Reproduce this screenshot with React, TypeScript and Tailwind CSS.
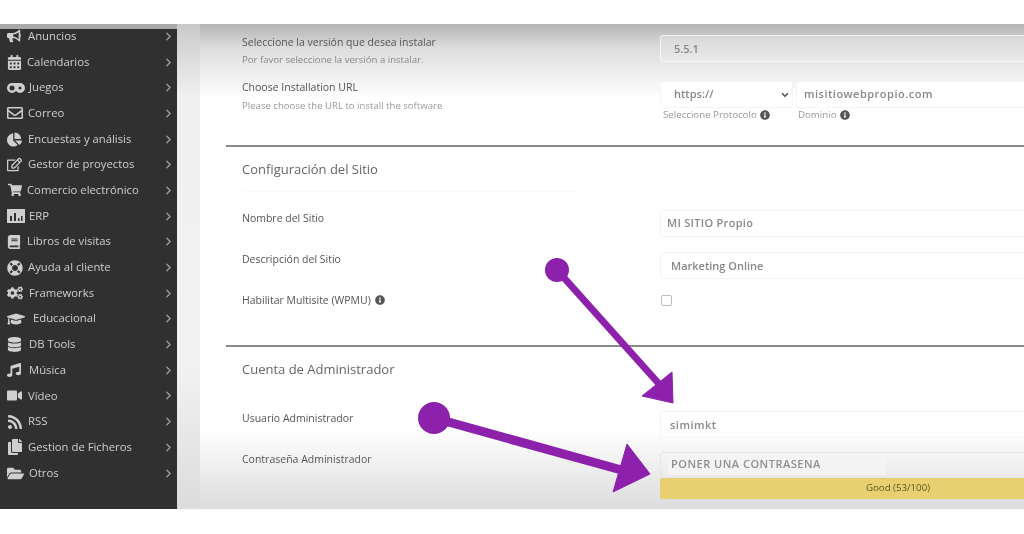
import React from "react";
import {
  FaBullhorn, FaCalendarAlt, FaRegEnvelope, FaChartPie, FaRegEdit, FaShoppingCart,
  FaBook, FaLifeRing, FaCogs, FaGraduationCap, FaDatabase, FaMusic, FaVideo, FaRss, FaCopy, FaFolderOpen, FaInfoCircle,
} from "react-icons/fa";
import { ChevronRight, ChevronDown } from "lucide-react";

function PillIcon() {
  return (
    <svg viewBox="0 0 18 10" className="h-[10px] w-[18px]" fill="currentColor">
      <path fillRule="evenodd" d="M5 0h8a5 5 0 0 1 0 10c-1.6 0-2.6-.8-4-2-1.4 1.2-2.4 2-4 2A5 5 0 0 1 5 0Zm0 2.5a2.5 2.5 0 1 0 0 5 2.5 2.5 0 0 0 0-5Zm8 1a1.5 1.5 0 1 0 0 3 1.5 1.5 0 0 0 0-3Z" />
    </svg>
  );
}

function ErpIcon() {
  return (
    <svg viewBox="0 0 18 14" className="h-[14px] w-[18px]" fill="currentColor">
      <path fillRule="evenodd" d="M0 0h18v14H0Zm3 7v5h2V7Zm4-3v8h2V4Zm4 5v3h1.500V9Zm3-2v5h1.500V7Z" />
    </svg>
  );
}

const items: { label: string; icon: React.ReactNode; cls: string; size: string }[] = [
  { label: "Anuncios", icon: <FaBullhorn />, cls: "ml-[7px] w-[21px]", size: "text-[14px]" },
  { label: "Calendarios", icon: <FaCalendarAlt />, cls: "ml-[7px] w-[20px]", size: "text-[15px]" },
  { label: "Juegos", icon: <PillIcon />, cls: "ml-[7px] w-[22px]", size: "text-[18px]" },
  { label: "Correo", icon: <FaRegEnvelope />, cls: "ml-[7px] w-[21px]", size: "text-[16px]" },
  { label: "Encuestas y análisis", icon: <FaChartPie />, cls: "ml-[7px] w-[21px]", size: "text-[15px]" },
  { label: "Gestor de proyectos", icon: <FaRegEdit />, cls: "ml-[7px] w-[21px]", size: "text-[15px]" },
  { label: "Comercio electrónico", icon: <FaShoppingCart />, cls: "ml-[8px] w-[19px]", size: "text-[14px]" },
  { label: "ERP", icon: <ErpIcon />, cls: "ml-[7px] w-[22px]", size: "text-[17px]" },
  { label: "Libros de visitas", icon: <FaBook />, cls: "ml-[7px] w-[20px]", size: "text-[14px]" },
  { label: "Ayuda al cliente", icon: <FaLifeRing />, cls: "ml-[7px] w-[21px]", size: "text-[16px]" },
  { label: "Frameworks", icon: <FaCogs />, cls: "ml-[7px] w-[22px]", size: "text-[16px]" },
  { label: "Educacional", icon: <FaGraduationCap />, cls: "ml-[7px] w-[26px]", size: "text-[18px]" },
  { label: "DB Tools", icon: <FaDatabase />, cls: "ml-[7px] w-[22px]", size: "text-[15px]" },
  { label: "Música", icon: <FaMusic />, cls: "ml-[7px] w-[22px]", size: "text-[14px]" },
  { label: "Vídeo", icon: <FaVideo />, cls: "ml-[7px] w-[21px]", size: "text-[15px]" },
  { label: "RSS", icon: <FaRss />, cls: "ml-[7px] w-[21px]", size: "text-[16px]" },
  { label: "Gestion de Ficheros", icon: <FaCopy />, cls: "ml-[7px] w-[21px]", size: "text-[16px]" },
  { label: "Otros", icon: <FaFolderOpen />, cls: "ml-[7px] w-[22px]", size: "text-[17px]" },
];

function Label({ children, className = "" }: { children: React.ReactNode; className?: string }) {
  return <div className={"w-[434px] shrink-0 pl-4 text-[10.5px] leading-[14px] text-[#555] " + className}>{children}</div>;
}

function Field({ children, className = "" }: { children?: React.ReactNode; className?: string }) {
  return (
    <div className={"flex h-[27px] w-[476px] shrink-0 items-center rounded-[3px] border border-[#f5f5f5] font-semibold text-[#888] " + className}>
      {children}
    </div>
  );
}

export default function App() {
  return (
    <div className="h-[534px] w-[1024px] overflow-hidden bg-white pt-6 font-['Open_Sans',sans-serif]">
      <div className="relative flex h-[485px] overflow-hidden blur-[0.6px]">
        <aside className="flex w-[177px] shrink-0 flex-col bg-[#303030]">
          <div className="h-[5px] shrink-0 bg-[#a9a9a9]" />
          <div className="-mt-[5.5px] overflow-hidden">
            {items.map(({ label, icon, cls, size }) => (
              <div key={label} className="flex h-[25.7px] items-center text-[11.3px] text-[#cfcfcf]">
                <span className={"flex shrink-0 items-center " + cls + " " + size}>{icon}</span>
                <span className="flex-1 whitespace-nowrap">{label}</span>
                <ChevronRight className="mr-[2px] h-[13px] w-[13px] text-[#9a9a9a]" strokeWidth={2.5} />
              </div>
            ))}
          </div>
        </aside>
        <div className="w-[23px] shrink-0 bg-[linear-gradient(#c9c9c9,#f0f0f0_15%,#f2f2f2_70%,#dcdcdc)]" />
        <main className="min-w-0 flex-1 bg-[linear-gradient(#b4b4b4_0px,#dedede_25px,#ffffff_75px,#ffffff_405px,#dcdcdc_485px)] pl-[26px]">
          <section className="h-[123px] border-b-2 border-[#8a8a8a] pt-[11px]">
            <div className="flex h-[27px]">
              <Label>
                <div>Seleccione la versión que desea instalar</div>
                <div className="mt-[4px] text-[9.6px] text-[#888]">Por favor seleccione la versión a instalar.</div>
              </Label>
              <Field className="bg-[linear-gradient(#d8d8d8,#eaeaea)] pl-[13px] pt-[1px] text-[11px]">5.5.1</Field>
            </div>
            <div className="mt-[18px] flex">
              <Label>
                <div>Choose Installation URL</div>
                <div className="mt-[5px] text-[9.6px] text-[#999]">Please choose the URL to install the software</div>
              </Label>
              <div className="w-[476px] shrink-0">
                <div className="flex gap-[3px] pt-[1px]">
                  <div className="flex h-[27px] w-[133px] shrink-0 items-center justify-between rounded-[3px] border border-[#f5f5f5] bg-white pl-[13px] pr-[2px] text-[11px] font-semibold text-[#888]">
                    https://
                    <ChevronDown className="h-[10px] w-[10px] text-[#555]" strokeWidth={4} />
                  </div>
                  <Field className="w-[340px] bg-white pl-[7px] text-[11px] tracking-[0.5px]">misitiowebpropio.com</Field>
                </div>
                <div className="flex text-[9.7px] leading-[14px] text-[#999]">
                  <span className="flex w-[135px] items-center gap-[3px] pl-[3px]">
                    Seleccione Protocolo <FaInfoCircle className="text-[10px] text-[#555]" />
                  </span>
                  <span className="flex items-center gap-[3px] pl-[3px]">
                    Dominio <FaInfoCircle className="text-[10px] text-[#555]" />
                  </span>
                </div>
              </div>
            </div>
          </section>

          <section className="h-[200px] border-b-2 border-[#8a8a8a]">
            <div className="ml-4 h-[45px] w-[336px] border-b border-[#f9f9f9] pt-[12px] text-[13px] leading-[20px] text-[#666]">
              Configuración del Sitio
            </div>
            <div className="mt-[18px] flex h-[27px]">
              <Label className="pt-[1px]">Nombre del Sitio</Label>
              <Field className="pl-[6px] text-[11px] tracking-[0.3px]">MI SITIO Propio</Field>
            </div>
            <div className="mt-[15px] flex h-[27px]">
              <Label>Descripción del Sitio</Label>
              <Field className="pl-[10px] pt-[1px] text-[11px] font-medium text-[#666]">Marketing Online</Field>
            </div>
            <div className="mt-[14px] flex h-[14px] items-center">
              <Label>
                <span className="flex items-center gap-[4px]">
                  Habilitar Multisite (WPMU) <FaInfoCircle className="text-[10px] text-[#555]" />
                </span>
              </Label>
              <div className="ml-[1px] h-[11px] w-[11px] rounded-[2px] border border-[#bbbbbb] bg-white" />
            </div>
          </section>

          <section>
            <div className="ml-4 h-[43px] pt-[12px] text-[13px] leading-[20px] text-[#666]">Cuenta de Administrador</div>
            <div className="mt-[21px] flex h-[27px]">
              <Label>Usuario Administrador</Label>
              <Field className="pl-[9px] pt-[1px] text-[11px] tracking-[0.5px] text-[#8f8f8f]">simimkt</Field>
            </div>
            <div className="mt-[14px] flex">
              <Label>Contraseña Administrador</Label>
              <div className="w-[476px] shrink-0">
                <div className="flex h-[26px] items-center rounded-[3px] border border-[#dfe8ee] pb-[1px] pl-[7px]">
                  <div className="flex h-[20px] w-[218px] items-center bg-[#f4f4f4] pl-[3px] text-[11px] font-semibold tracking-[0.5px] text-[#8f8f8f]">
                    PONER UNA CONTRASENA
                  </div>
                </div>
                <div className="flex h-[21px] items-center justify-center rounded-[2px] bg-[#e8d070] text-[9.7px] font-medium text-[#5f5428]">
                  Good (53/100)
                </div>
              </div>
            </div>
          </section>
        </main>

        <svg className="absolute left-0 top-0 h-[485px] w-[1024px]" viewBox="0 24 1024 485" fill="#8d21ab">
          <circle cx="557" cy="270" r="12" />
          <line x1="557" y1="270" x2="660" y2="385" stroke="#8d21ab" strokeWidth="7" />
          <polygon points="673,403 642,396 672,372" stroke="#8d21ab" strokeWidth="1" strokeLinejoin="round" />
          <circle cx="434" cy="418" r="16" />
          <line x1="434" y1="418" x2="625" y2="471" stroke="#8d21ab" strokeWidth="9" />
          <polygon points="650,474 627,444 613,492" stroke="#8d21ab" strokeWidth="1" strokeLinejoin="round" />
        </svg>
      </div>
    </div>
  );
}
